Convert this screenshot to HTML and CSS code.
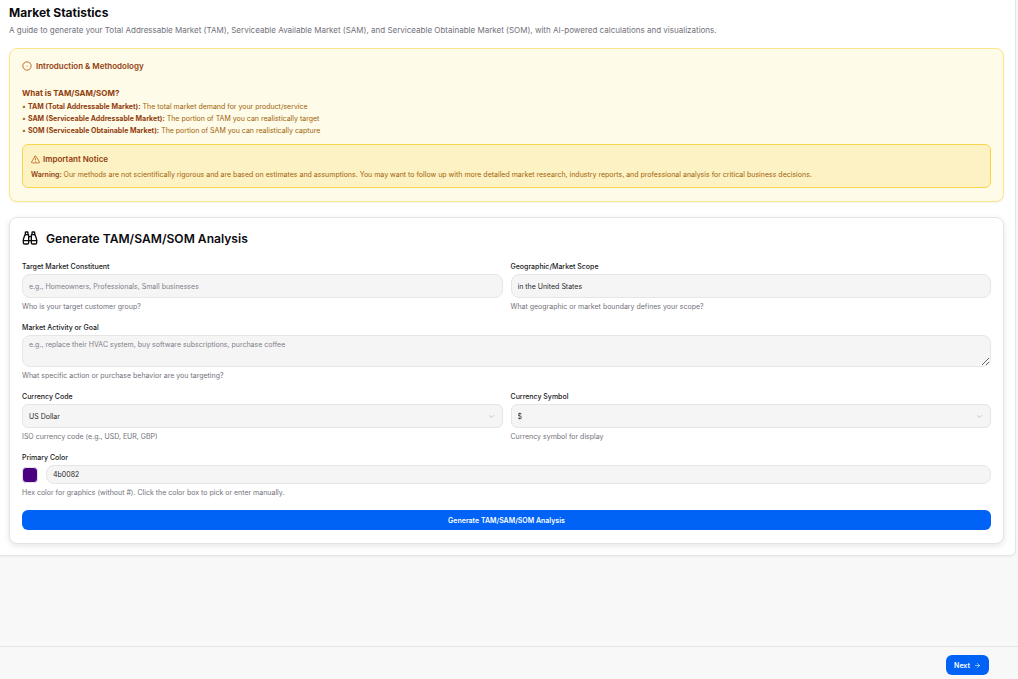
FILE: index.html
```html
<!DOCTYPE html>
<html lang="en">
<head>
    <meta charset="UTF-8">
    <title>Market Statistics</title>
    <link rel="stylesheet" href="styles.css">
</head>
<body>
<div class="page">
    <main class="panel">
        <h1 class="page-title">Market Statistics</h1>
        <p class="page-sub">A guide to generate your Total Addressable Market (TAM), Serviceable Available Market (SAM), and Serviceable Obtainable Market (SOM), with AI-powered calculations and visualizations.</p>

        <section class="intro">
            <h2 class="intro-title">
                <svg class="intro-icon" viewBox="0 0 24 24" fill="none" stroke="currentColor" stroke-width="2"><circle cx="12" cy="12" r="10"/><circle cx="12" cy="12" r="1.2" fill="currentColor" stroke="none"/></svg>
                Introduction &amp; Methodology
            </h2>
            <h3 class="intro-q">What is TAM/SAM/SOM?</h3>
            <ul class="intro-list">
                <li>• <b>TAM (Total Addressable Market):</b> The total market demand for your product/service</li>
                <li>• <b>SAM (Serviceable Addressable Market):</b> The portion of TAM you can realistically target</li>
                <li>• <b>SOM (Serviceable Obtainable Market):</b> The portion of SAM you can realistically capture</li>
            </ul>
            <div class="notice">
                <h4 class="notice-title">
                    <svg class="notice-icon" viewBox="0 0 24 24" fill="none" stroke="currentColor" stroke-width="2" stroke-linejoin="round" stroke-linecap="round"><path d="M10.3 3.9 1.8 18a2 2 0 0 0 1.7 3h17a2 2 0 0 0 1.7-3L13.7 3.9a2 2 0 0 0-3.4 0z"/><path d="M12 9v4"/><path d="M12 17h.01"/></svg>
                    Important Notice
                </h4>
                <p class="notice-text"><b>Warning:</b> Our methods are not scientifically rigorous and are based on estimates and assumptions. You may want to follow up with more detailed market research, industry reports, and professional analysis for critical business decisions.</p>
            </div>
        </section>

        <section class="card">
            <h2 class="card-title">
                <svg class="card-icon" viewBox="0 0 24 24" fill="none" stroke="currentColor" stroke-width="2" stroke-linecap="round" stroke-linejoin="round"><path d="M10 10h4"/><path d="M19 7V4a1 1 0 0 0-1-1h-2a1 1 0 0 0-1 1v3"/><path d="M20 21a2 2 0 0 0 2-2v-3.85c0-1.8-.78-3.5-1.4-5.2C20.2 8.8 20 8 19 7h-4c-.6 0-1 .4-1 1v11a2 2 0 0 0 2 2z"/><path d="M22 16H2"/><path d="M4 21a2 2 0 0 1-2-2v-3.85c0-1.8.78-3.5 1.4-5.2C3.8 8.8 4 8 5 7h4c.6 0 1 .4 1 1v11a2 2 0 0 1-2 2z"/><path d="M9 7V4a1 1 0 0 0-1-1H6a1 1 0 0 0-1 1v3"/></svg>
                Generate TAM/SAM/SOM Analysis
            </h2>
            <form class="form">
                <div class="field">
                    <label class="label">Target Market Constituent</label>
                    <input class="control" type="text" placeholder="e.g., Homeowners, Professionals, Small businesses">
                    <p class="help">Who is your target customer group?</p>
                </div>
                <div class="field">
                    <label class="label">Geographic/Market Scope</label>
                    <input class="control" type="text" value="in the United States">
                    <p class="help">What geographic or market boundary defines your scope?</p>
                </div>
                <div class="field wide">
                    <label class="label">Market Activity or Goal</label>
                    <textarea class="control area" placeholder="e.g., replace their HVAC system, buy software subscriptions, purchase coffee"></textarea>
                    <p class="help">What specific action or purchase behavior are you targeting?</p>
                </div>
                <div class="field">
                    <label class="label">Currency Code</label>
                    <div class="select-wrap">
                        <select class="control select"><option>US Dollar</option></select>
                        <svg class="chevron" viewBox="0 0 24 24" fill="none" stroke="currentColor" stroke-width="2" stroke-linecap="round" stroke-linejoin="round"><path d="m6 9 6 6 6-6"/></svg>
                    </div>
                    <p class="help">ISO currency code (e.g., USD, EUR, GBP)</p>
                </div>
                <div class="field">
                    <label class="label">Currency Symbol</label>
                    <div class="select-wrap">
                        <select class="control select"><option>$</option></select>
                        <svg class="chevron" viewBox="0 0 24 24" fill="none" stroke="currentColor" stroke-width="2" stroke-linecap="round" stroke-linejoin="round"><path d="m6 9 6 6 6-6"/></svg>
                    </div>
                    <p class="help">Currency symbol for display</p>
                </div>
                <div class="field wide">
                    <label class="label">Primary Color</label>
                    <div class="color-row">
                        <span class="swatch"></span>
                        <input class="control hex" type="text" value="4b0082">
                    </div>
                    <p class="help">Hex color for graphics (without #). Click the color box to pick or enter manually.</p>
                </div>
                <button class="btn submit wide" type="button">Generate TAM/SAM/SOM Analysis</button>
            </form>
        </section>
    </main>

    <footer class="footer">
        <button class="btn next" type="button">Next
            <svg class="arrow" viewBox="0 0 24 24" fill="none" stroke="currentColor" stroke-width="2" stroke-linecap="round" stroke-linejoin="round"><path d="M5 12h14"/><path d="m12 5 7 7-7 7"/></svg>
        </button>
    </footer>
</div>
</body>
</html>
```

FILE: styles.css
```css
* {box-sizing:border-box;}
html, body {margin:0;padding:0;height:100%;}
body {background:#f8f8f8;font-family:Inter, "Liberation Sans", sans-serif;color:#11181c;}
h1, h2, h3, h4, p, ul {margin:0;padding:0;}

.page {height:679px;display:flex;flex-direction:column;justify-content:space-between;overflow:hidden;}

.panel {width:1016px;height:556px;background:#fff;padding:5px 11px 0 9px;border-right:1px solid #e6e6e6;border-bottom:1px solid #e6e6e6;border-bottom-right-radius:6px;box-shadow:0 1px 2px rgba(0,0,0,.05);}
.page-title {font-size:12px;line-height:16px;font-weight:700;color:#0b0b0f;}
.page-sub {font-size:8px;line-height:12px;margin-top:3px;color:#71717a;}

.intro {margin-top:12px;height:154px;background:#fefbe8;border:1px solid #fde68a;border-radius:8px;padding:0 12px;color:#92400e;box-shadow:0 1px 2px rgba(0,0,0,.06);}
.intro-title {display:flex;align-items:center;gap:4px;height:12px;margin-top:11px;font-size:8px;font-weight:600;}
.intro-icon {width:10px;height:10px;color:#b45309;}
.intro-q {margin-top:15px;font-size:8px;line-height:12px;font-weight:700;}
.intro-list {list-style:none;margin-top:2px;font-size:7px;line-height:12px;color:#a16207;}
.intro-list b {font-weight:700;color:#92400e;}

.notice {margin-top:7px;height:44px;background:#fdf2c4;border:1px solid #fcd34d;border-radius:6px;padding:0 8px;}
.notice-title {display:flex;align-items:center;gap:3px;height:12px;margin-top:8px;font-size:8px;font-weight:600;}
.notice-icon {width:9px;height:9px;color:#b45309;}
.notice-text {margin-top:4px;font-size:7px;line-height:12px;color:#a16207;}
.notice-text b {font-weight:600;color:#92400e;}

.card {margin-top:15px;height:327px;background:#fff;border:1px solid #e4e4e7;border-radius:8px;padding:0 12px;box-shadow:0 2px 6px rgba(0,0,0,.1);}
.card-title {display:flex;align-items:center;gap:8px;height:20px;margin-top:10px;font-size:12.1px;font-weight:600;color:#0b0b0f;}
.card-icon {width:16px;height:16px;}

.form {display:grid;grid-template-columns:1fr 1fr;column-gap:8px;margin-top:13px;}
.field {display:flex;flex-direction:column;}
.wide {grid-column:1 / -1;}
.label {font-size:7px;line-height:12px;font-weight:500;color:#18181b;height:12px;margin-bottom:1px;}
.help {font-size:7px;line-height:12px;color:#71717a;margin-top:3px;height:21px;}

.control {display:block;width:100%;height:24px;background:#f5f5f5;border:1px solid #e6e6e6;border-radius:8px;padding:0 6px;font-family:inherit;font-size:7px;color:#27272a;outline:none;}
.control::placeholder {color:#80808a;opacity:1;}
.area {height:32px;padding:3px 6px;resize:vertical;line-height:12px;}
.select-wrap {position:relative;}
.select {appearance:none;border-radius:6px;}
.chevron {position:absolute;right:8px;top:9px;width:7px;height:7px;color:#a1a1aa;}

.color-row {display:flex;align-items:center;gap:8px;height:19px;}
.swatch {width:16px;height:16px;flex:none;background:#4b0082;border:1px solid #e4e4e7;border-radius:4px;}
.hex {height:19px;flex:1;}

.submit {height:20px;margin-top:2px;}
.btn {display:flex;align-items:center;justify-content:center;background:#0063f5;color:#fff;border:0;border-radius:6px;font-family:inherit;font-size:7px;font-weight:600;}

.footer {height:33px;border-top:1px solid #e4e4e7;background:#f8f8f8;display:flex;justify-content:flex-end;padding:8px 29px 0 0;}
.next {width:43px;height:20px;gap:4px;}
.arrow {width:7px;height:7px;}
```
